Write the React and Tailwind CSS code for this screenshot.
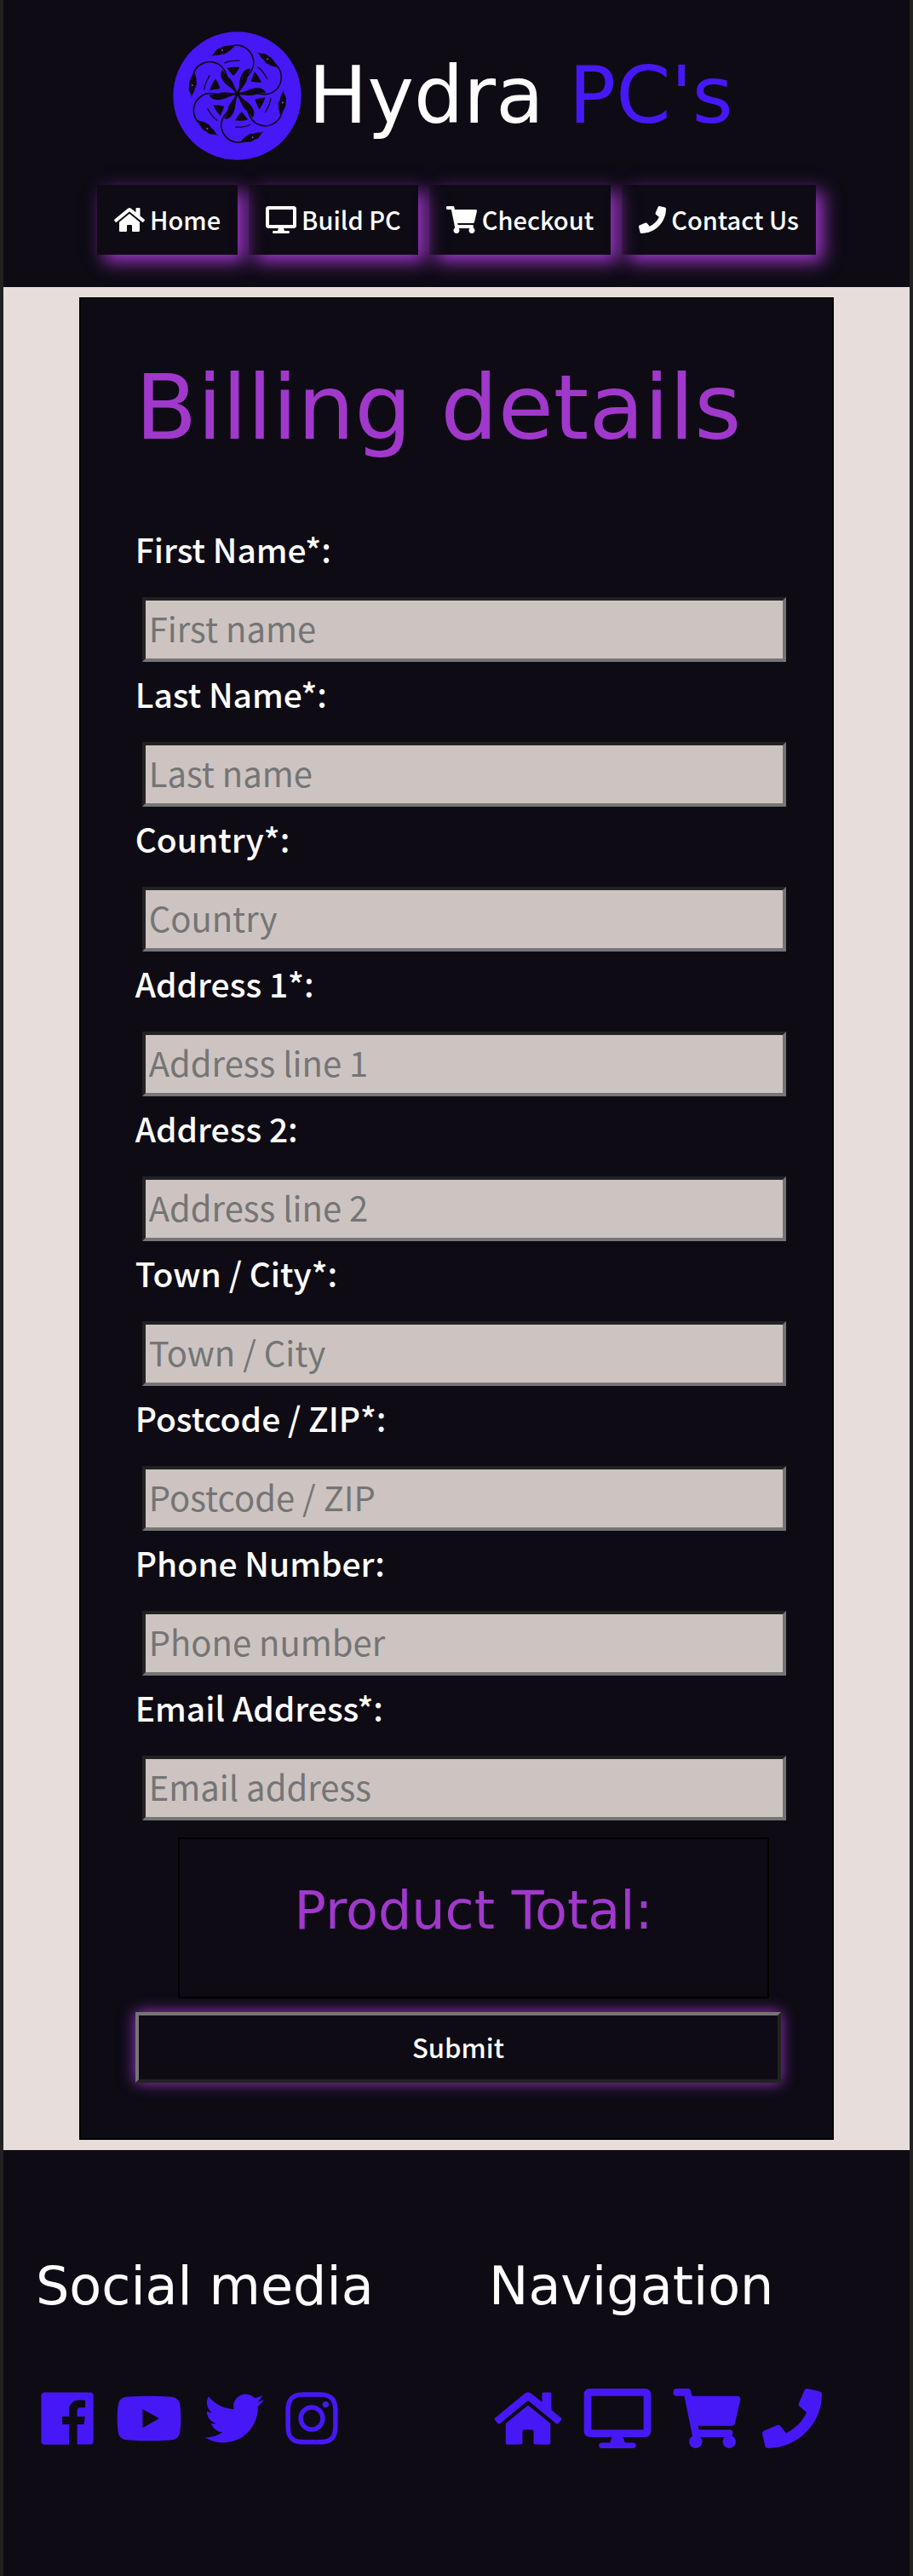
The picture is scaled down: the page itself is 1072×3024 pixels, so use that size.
import React from "react";
import { FaHome, FaDesktop, FaShoppingCart, FaPhone, FaYoutube, FaTwitter, FaInstagram } from "react-icons/fa";

const fields = [
  { id: "first-name", label: "First Name*:", placeholder: "First name" },
  { id: "last-name", label: "Last Name*:", placeholder: "Last name" },
  { id: "country", label: "Country*:", placeholder: "Country" },
  { id: "address-1", label: "Address 1*:", placeholder: "Address line 1" },
  { id: "address-2", label: "Address 2:", placeholder: "Address line 2" },
  { id: "town", label: "Town / City*:", placeholder: "Town / City" },
  { id: "postcode", label: "Postcode / ZIP*:", placeholder: "Postcode / ZIP" },
  { id: "phone", label: "Phone Number:", placeholder: "Phone number", type: "tel" },
  { id: "email", label: "Email Address*:", placeholder: "Email address", type: "email" },
];

const pages = [
  { name: "Home", Icon: FaHome, small: "h-8 w-9", large: "h-[70px] w-20" },
  { name: "Build PC", Icon: FaDesktop, small: "h-8 w-9", large: "h-[70px] w-20" },
  { name: "Checkout", Icon: FaShoppingCart, small: "h-8 w-9", large: "h-[70px] w-20" },
  { name: "Contact Us", Icon: FaPhone, small: "h-8 w-8", large: "h-[70px] w-[70px]" },
];

function FacebookIcon({ className }) {
  return (
    <svg viewBox="0 0 448 512" fill="currentColor" className={className} aria-hidden="true">
      <path d="M448 56.7v398.5c0 13.7-11.1 24.7-24.7 24.7H309.1V306.5h58.2l8.7-67.6h-67v-43.2c0-19.6 5.4-32.9 33.5-32.9h35.8v-60.5c-6.2-.8-27.4-2.7-52.2-2.7-51.6 0-87 31.5-87 89.4v49.9h-58.4v67.6h58.4V480H24.7C11.1 480 0 468.9 0 455.3V56.7C0 43.1 11.1 32 24.7 32h398.5c13.7 0 24.8 11.1 24.8 24.7z" />
    </svg>
  );
}

const social = [
  { name: "Facebook", Icon: FacebookIcon, size: "h-[70px] w-[62px]" },
  { name: "YouTube", Icon: FaYoutube, size: "h-[70px] w-20" },
  { name: "Twitter", Icon: FaTwitter, size: "h-[70px] w-[70px]" },
  { name: "Instagram", Icon: FaInstagram, size: "h-[70px] w-[62px]" },
];

function Logo() {
  return (
    <svg viewBox="-227 -219 452 452" className="h-[151px] w-[151px] shrink-0" role="img" aria-label="Hydra logo">
      <circle cx="-1" cy="7" r="225" fill="#4718f6" />
      {[0, 60, 120, 180, 240, 300].map((angle) => (
        <g key={angle} transform={`rotate(${angle})`} fill="#0d0a14">
          <path
            d="M-22-168C20-180 57-150 57-108C57-72 12-52 0 0"
            fill="none"
            stroke="#0d0a14"
            strokeWidth="5"
          />
          <path d="M-94-132C-78-140-80-158-60-161C-48-172-30-168-6-171C-20-160-22-152-36-146C-44-136-54-143-64-137C-74-134-82-138-94-132Z" />
          <path d="M46-88C32-90 22-82 14-66C4-46 10-24-4 4L4 6C6-16 30-30 34-52C34-68 42-76 46-88Z" />
          <path d="M-38-90C-24-96-4-94 8-94C3-84-3-74-14-63C-24-70-26-80-38-90Z" />
          <path d="M-46-108C-30-118-10-117 8-117" fill="none" stroke="#0d0a14" strokeWidth="4" />
          <circle cx="-53" cy="-153" r="3" fill="#a138cc" />
        </g>
      ))}
    </svg>
  );
}

const display = "font-['DejaVu_Sans',sans-serif] font-normal";

export default function App() {
  return (
    <div className="min-h-screen border-x-4 border-[#222222] bg-[#e7dedc] font-['Noto_Sans_CJK_SC',sans-serif] text-white">
      <header className="bg-[#0e0b15] px-4 pt-[37px] pb-[38px]">
        <a href="#home" className="flex items-center justify-center gap-2 pr-2">
          <Logo />
          <span className={`${display} text-[92px] leading-[120px] whitespace-nowrap`}>
            Hydra <span className="text-[#4718f6]">PC's</span>
          </span>
        </a>
        <nav className="mt-[29px] flex justify-center gap-[13px]">
          {pages.map(({ name, Icon, small }) => (
            <a
              key={name}
              href={`#${name}`}
              className="flex h-[82px] items-center gap-[6px] px-5 text-[29px] font-medium whitespace-nowrap shadow-[8px_8px_20px_#a138cc]"
            >
              <Icon className={small} />
              {name}
            </a>
          ))}
        </nav>
      </header>

      <main className="py-3">
        <form
          className="mx-auto w-5/6 border-2 border-black bg-[#0e0b15] pt-[60px] pr-[54px] pb-[65px] pl-16"
          onSubmit={(e) => e.preventDefault()}
        >
          <h1 className={`${display} text-[106px] leading-[136px] whitespace-nowrap text-[#a138cc]`}>Billing details</h1>
          <div className="mt-[60px]">
            {fields.map(({ id, label, placeholder, type = "text" }) => (
              <div key={id} className="h-[170px]">
                <label htmlFor={id} className="block h-[94px] text-[39px] leading-[74px] font-medium">
                  {label}
                </label>
                <div className="pl-2">
                  <input
                    id={id}
                    type={type}
                    placeholder={placeholder}
                    className="block h-[76px] w-full border-4 border-t-[#222222] border-r-[#757575] border-b-[#757575] border-l-[#222222] bg-[#cdc4c2] px-1 pb-1 text-[40px] text-black placeholder:text-[#757575]"
                  />
                </div>
              </div>
            ))}
          </div>
          <div className="mt-5 mr-5 ml-[50px] border-2 border-black pt-[46px] pb-[63px] text-center">
            <h2 className={`${display} text-[62px] leading-[76px] text-[#a138cc]`}>Product Total:</h2>
          </div>
          <div className="mt-4 pr-[6px]">
            <button
              type="submit"
              className="block h-[83px] w-full border-4 border-t-[#757575] border-r-[#222222] border-b-[#222222] border-l-[#757575] bg-[#0e0b15] text-[31px] font-medium shadow-[0_0_16px_#a138cc]"
            >
              Submit
            </button>
          </div>
        </form>
      </main>

      <footer className="grid grid-cols-2 bg-[#0e0b15] pt-[122px] pb-[150px]">
        <section className="pl-[38px]">
          <h2 className={`${display} text-[62px] leading-[76px] whitespace-nowrap`}>Social media</h2>
          <div className="mt-[82px] flex gap-[25px] pl-[6px] text-[#4718f6]">
            {social.map(({ name, Icon, size }) => (
              <a key={name} href={`#${name}`} aria-label={name}>
                <Icon className={size} />
              </a>
            ))}
          </div>
        </section>
        <section className="pl-[38px]">
          <h2 className={`${display} text-[62px] leading-[76px] whitespace-nowrap`}>Navigation</h2>
          <div className="mt-[82px] flex gap-[25px] pl-[6px] text-[#4718f6]">
            {pages.map(({ name, Icon, large }) => (
              <a key={name} href={`#${name}`} aria-label={name}>
                <Icon className={large} />
              </a>
            ))}
          </div>
        </section>
      </footer>
    </div>
  );
}
